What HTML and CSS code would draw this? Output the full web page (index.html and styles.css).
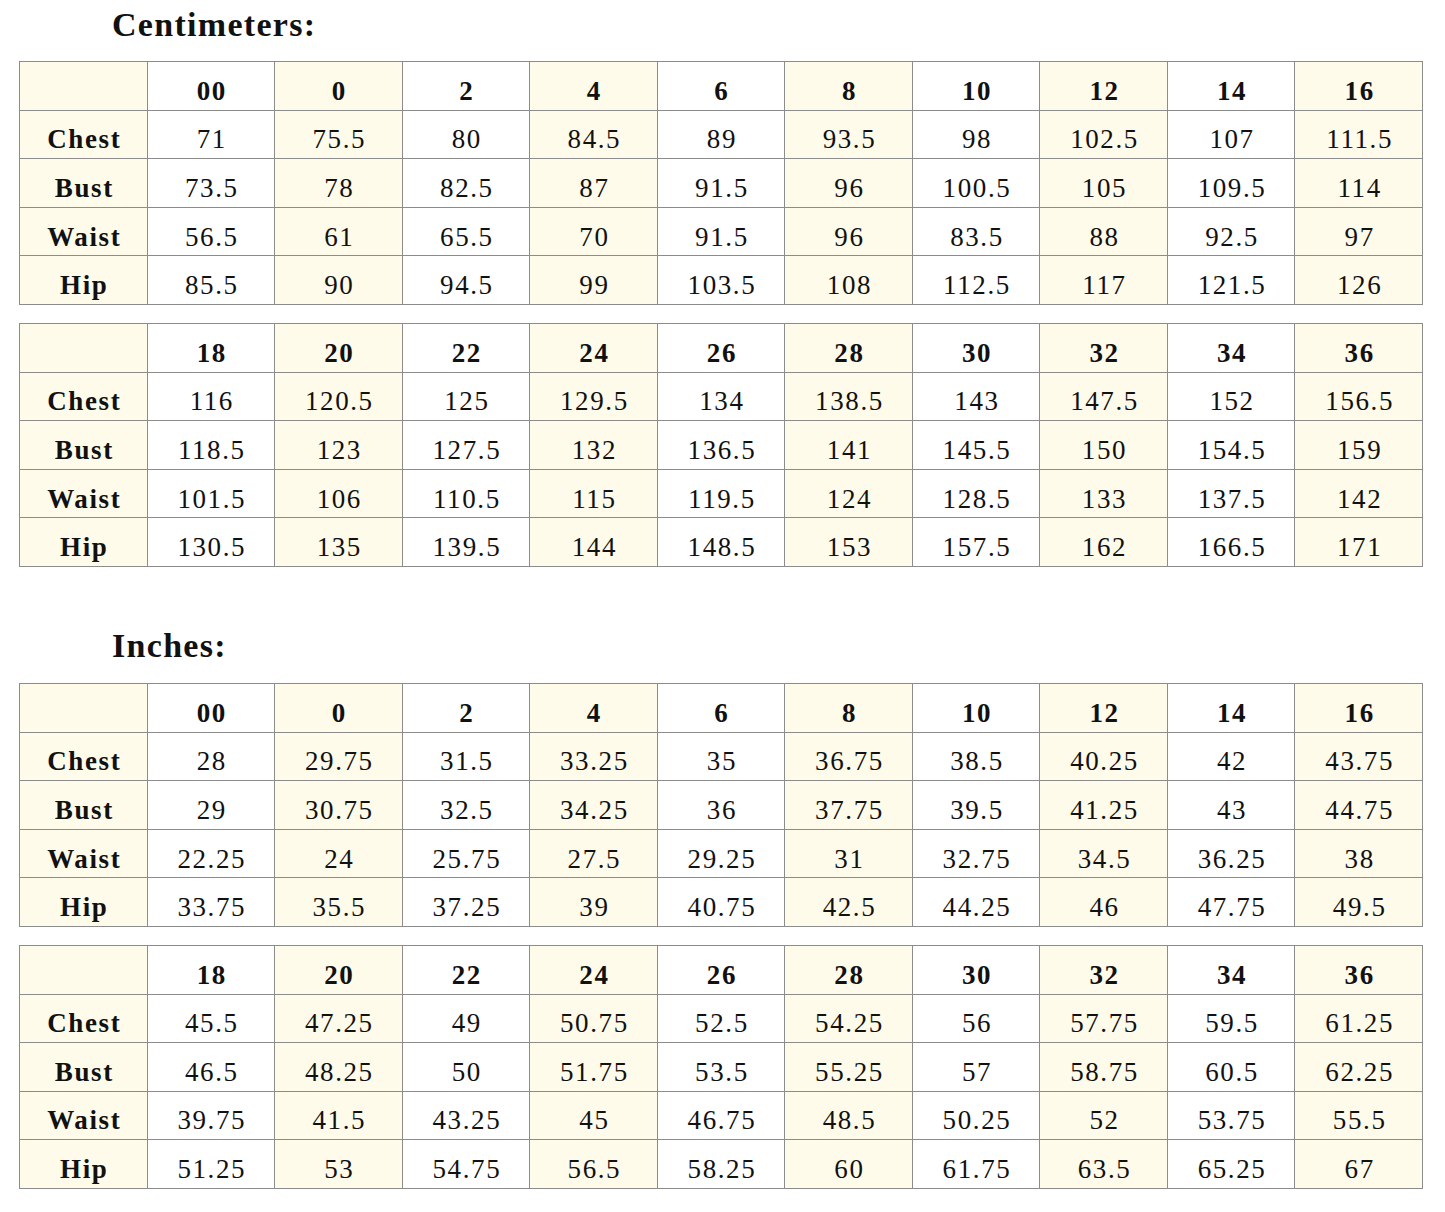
FILE: index.html
```html
<!DOCTYPE html>
<html>
<head>
<meta charset="utf-8">
<link rel="stylesheet" href="styles.css">
</head>
<body>
<div class="page">
  <h2 class="title">Centimeters:</h2>
  <table class="chart">
    <colgroup><col class="c"><col><col class="c"><col><col class="c"><col><col class="c"><col><col class="c"><col><col class="c"></colgroup>
    <tr class="head"><th></th><th>00</th><th>0</th><th>2</th><th>4</th><th>6</th><th>8</th><th>10</th><th>12</th><th>14</th><th>16</th></tr>
    <tr><th>Chest</th><td>71</td><td>75.5</td><td>80</td><td>84.5</td><td>89</td><td>93.5</td><td>98</td><td>102.5</td><td>107</td><td>111.5</td></tr>
    <tr><th>Bust</th><td>73.5</td><td>78</td><td>82.5</td><td>87</td><td>91.5</td><td>96</td><td>100.5</td><td>105</td><td>109.5</td><td>114</td></tr>
    <tr><th>Waist</th><td>56.5</td><td>61</td><td>65.5</td><td>70</td><td>91.5</td><td>96</td><td>83.5</td><td>88</td><td>92.5</td><td>97</td></tr>
    <tr><th>Hip</th><td>85.5</td><td>90</td><td>94.5</td><td>99</td><td>103.5</td><td>108</td><td>112.5</td><td>117</td><td>121.5</td><td>126</td></tr>
  </table>
  <table class="chart">
    <colgroup><col class="c"><col><col class="c"><col><col class="c"><col><col class="c"><col><col class="c"><col><col class="c"></colgroup>
    <tr class="head"><th></th><th>18</th><th>20</th><th>22</th><th>24</th><th>26</th><th>28</th><th>30</th><th>32</th><th>34</th><th>36</th></tr>
    <tr><th>Chest</th><td>116</td><td>120.5</td><td>125</td><td>129.5</td><td>134</td><td>138.5</td><td>143</td><td>147.5</td><td>152</td><td>156.5</td></tr>
    <tr><th>Bust</th><td>118.5</td><td>123</td><td>127.5</td><td>132</td><td>136.5</td><td>141</td><td>145.5</td><td>150</td><td>154.5</td><td>159</td></tr>
    <tr><th>Waist</th><td>101.5</td><td>106</td><td>110.5</td><td>115</td><td>119.5</td><td>124</td><td>128.5</td><td>133</td><td>137.5</td><td>142</td></tr>
    <tr><th>Hip</th><td>130.5</td><td>135</td><td>139.5</td><td>144</td><td>148.5</td><td>153</td><td>157.5</td><td>162</td><td>166.5</td><td>171</td></tr>
  </table>

  <h2 class="title title-second">Inches:</h2>
  <table class="chart">
    <colgroup><col class="c"><col><col class="c"><col><col class="c"><col><col class="c"><col><col class="c"><col><col class="c"></colgroup>
    <tr class="head"><th></th><th>00</th><th>0</th><th>2</th><th>4</th><th>6</th><th>8</th><th>10</th><th>12</th><th>14</th><th>16</th></tr>
    <tr><th>Chest</th><td>28</td><td>29.75</td><td>31.5</td><td>33.25</td><td>35</td><td>36.75</td><td>38.5</td><td>40.25</td><td>42</td><td>43.75</td></tr>
    <tr><th>Bust</th><td>29</td><td>30.75</td><td>32.5</td><td>34.25</td><td>36</td><td>37.75</td><td>39.5</td><td>41.25</td><td>43</td><td>44.75</td></tr>
    <tr><th>Waist</th><td>22.25</td><td>24</td><td>25.75</td><td>27.5</td><td>29.25</td><td>31</td><td>32.75</td><td>34.5</td><td>36.25</td><td>38</td></tr>
    <tr><th>Hip</th><td>33.75</td><td>35.5</td><td>37.25</td><td>39</td><td>40.75</td><td>42.5</td><td>44.25</td><td>46</td><td>47.75</td><td>49.5</td></tr>
  </table>
  <table class="chart">
    <colgroup><col class="c"><col><col class="c"><col><col class="c"><col><col class="c"><col><col class="c"><col><col class="c"></colgroup>
    <tr class="head"><th></th><th>18</th><th>20</th><th>22</th><th>24</th><th>26</th><th>28</th><th>30</th><th>32</th><th>34</th><th>36</th></tr>
    <tr><th>Chest</th><td>45.5</td><td>47.25</td><td>49</td><td>50.75</td><td>52.5</td><td>54.25</td><td>56</td><td>57.75</td><td>59.5</td><td>61.25</td></tr>
    <tr><th>Bust</th><td>46.5</td><td>48.25</td><td>50</td><td>51.75</td><td>53.5</td><td>55.25</td><td>57</td><td>58.75</td><td>60.5</td><td>62.25</td></tr>
    <tr><th>Waist</th><td>39.75</td><td>41.5</td><td>43.25</td><td>45</td><td>46.75</td><td>48.5</td><td>50.25</td><td>52</td><td>53.75</td><td>55.5</td></tr>
    <tr><th>Hip</th><td>51.25</td><td>53</td><td>54.75</td><td>56.5</td><td>58.25</td><td>60</td><td>61.75</td><td>63.5</td><td>65.25</td><td>67</td></tr>
  </table>
</div>
</body>
</html>
```
FILE: styles.css
```css
html, body {
  margin: 0;
  padding: 0;
  background: #ffffff;
}

.page {
  padding: 0 0 0 19px;
  font-family: "Liberation Serif", "DejaVu Serif", serif;
  color: #111111;
}

.title {
  margin: 0;
  padding: 5px 0 0 93px;
  height: 61px;
  box-sizing: border-box;
  font-size: 34px;
  letter-spacing: 1.3px;
  font-weight: bold;
  line-height: 40px;
}

.title-second {
  padding-top: 41px;
  height: 98px;
}

.chart {
  border-collapse: collapse;
  table-layout: fixed;
  width: 1404px;
  margin-bottom: 18px;
}

.chart col.c {
  background: #fefbea;
}

.chart th,
.chart td {
  border: 1px solid #8c8c8c;
  height: 48.6px;
  padding: 10px 0 0 2px;
  text-align: center;
  vertical-align: middle;
  font-size: 27px;
  letter-spacing: 1.6px;
  line-height: 30px;
  box-sizing: border-box;
}

.chart th {
  font-weight: bold;
}

.chart td {
  font-weight: normal;
}
```
